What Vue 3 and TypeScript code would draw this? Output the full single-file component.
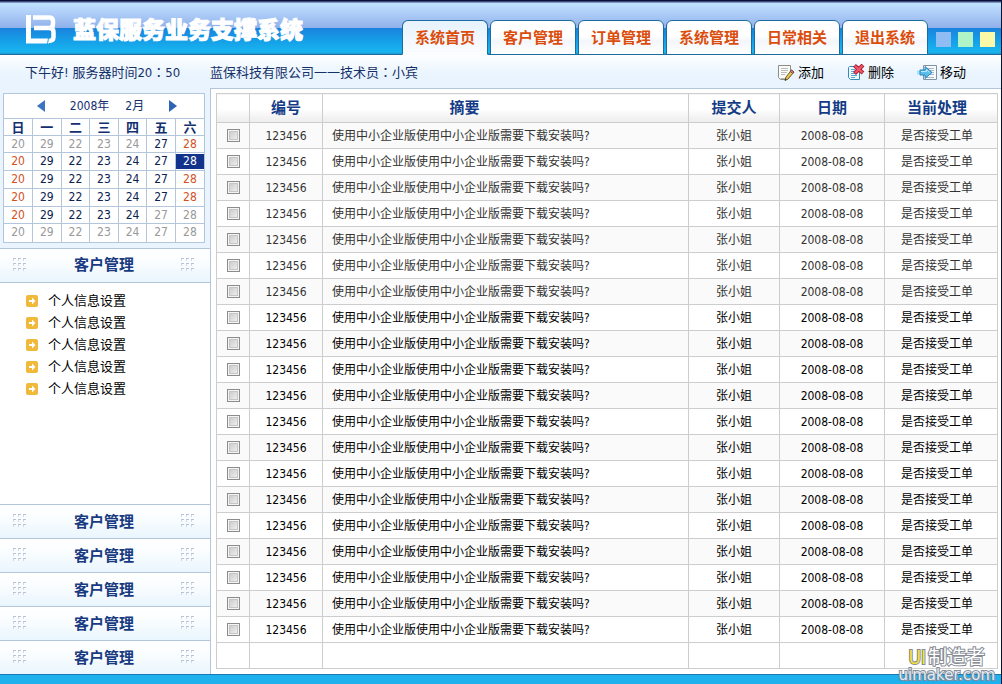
<script setup lang="ts">
import { ref } from 'vue'

interface Day { n: number; tone: 'mute' | 'work' | 'rest' | 'picked' }
interface Order { id: string; summary: string; by: string; date: string; state: string; checked: boolean }

const tabs: string[] = ['系统首页', '客户管理', '订单管理', '系统管理', '日常相关', '退出系统']
const activeTab = ref(0)
const themes: string[] = ['blue', 'green', 'yellow']
const weekdays: string[] = ['日', '一', '二', '三', '四', '五', '六']
const numbers = [20, 29, 22, 23, 24, 27, 28]
const tones: Record<string, Day['tone']> = { m: 'mute', w: 'work', r: 'rest', p: 'picked' }
const weeks: Day[][] = ['mmmmmwr', 'rwwwwwp', 'rwwwwwr', 'rwwwwwr', 'rwwwwmm', 'mmmmmmm'].map((row) =>
  row.split('').map((c, i) => ({ n: numbers[i], tone: tones[c] })),
)
const menu: string[] = Array.from({ length: 5 }, () => '个人信息设置')
const sections: string[] = Array.from({ length: 5 }, () => '客户管理')
const orders = ref<Order[]>(
  Array.from({ length: 20 }, () => ({
    id: '123456',
    summary: '使用中小企业版使用中小企业版需要下载安装吗?',
    by: '张小姐',
    date: '2008-08-08',
    state: '是否接受工单',
    checked: false,
  })),
)
</script>

<template>
  <div class="page">
    <header class="top">
      <svg class="logo" viewBox="0 0 32 30" aria-hidden="true">
        <path d="M3.500 1V27H24" fill="none" stroke="#fff" stroke-width="5" />
        <path d="M8 3.500H24Q28 3.500 28 7V10Q28 14 24 14H9M24 14Q28.500 14 28.500 18V23Q28.500 27 23 27" fill="none" stroke="#fff" stroke-width="4.500" />
        <path d="M23.500 24L22.500 30" stroke="#1ba5ea" stroke-width="1" />
      </svg>
      <h1>蓝保服务业务支撑系统</h1>
      <nav class="tabs">
        <a v-for="(t, i) in tabs" :key="t" href="#" :class="['tab', { active: i === activeTab }]" @click.prevent="activeTab = i">{{ t }}</a>
      </nav>
      <div class="themes">
        <button v-for="c in themes" :key="c" type="button" :class="['swatch', c]" :aria-label="c"></button>
      </div>
    </header>

    <div class="bar">
      <span class="greet">下午好! 服务器时间20<span class="colon">：</span>50</span>
      <span class="company">蓝保科技有限公司一一技术员<span class="colon">：</span>小宾</span>
      <div class="tools">
        <button type="button">
          <svg viewBox="0 0 18 18" aria-hidden="true">
            <path d="M1.500 1.500H13.500V12L10 15.500H3.500L1.500 13.500Z" fill="#fbfbf6" stroke="#8d8d86" />
            <path d="M3.500 14.500H11L13.500 12" fill="none" stroke="#b5b5ae" />
            <path d="M4 4.500H11M4 6.500H11M4 8.500H10M4 10.500H8" stroke="#b9bcc0" />
            <path d="M14.500 6L17 8L11 15L8 16.500L9 13Z" fill="#e8c35a" stroke="#6e5a2a" />
            <path d="M14.500 6L17 8L15.800 9.500L13.300 7.500Z" fill="#c98c8c" stroke="#7a4a3a" />
            <path d="M8 16.500L8.500 14.700L9.700 15.700Z" fill="#222" />
          </svg>
          添加
        </button>
        <button type="button">
          <svg viewBox="0 0 18 18" aria-hidden="true">
            <path d="M2.500 2.500H12.500V15.500H3.500L1.500 13.500V3.500Z" fill="#eaf7fd" stroke="#3c87b5" />
            <path d="M4 5.500H8M4 7.500H9M4 9.500H10M4 11.500H10M4 13.500H8" stroke="#5da9cf" />
            <path d="M7.500 1.500L16 9M16 1L7.500 9.500" stroke="#a81c2c" stroke-width="4" />
            <path d="M8 2L15.500 8.600M15.500 1.500L8 9" stroke="#f0576a" stroke-width="2.200" />
          </svg>
          删除
        </button>
        <button type="button">
          <svg class="wide" viewBox="0 0 20 18" aria-hidden="true">
            <path d="M6.500 1.500H19.500V15.500H6.500Z" fill="#f7fafc" stroke="#7f93a5" />
            <path d="M9 4.500H17M12 6.500H17M14 8.500H17M13 10.500H17M9 13.500H17" stroke="#a9b8c4" />
            <path d="M0 6.500H4V10.500H0Z" fill="#a6e2f8" />
            <path d="M3 6H8V2.500L15 8.500L8 14.500V11H3Z" fill="#5bbdea" stroke="#2b84bd" />
            <path d="M4 7.500H9.500V5.500L12.500 8.500" fill="none" stroke="#b8e9fb" />
          </svg>
          移动
        </button>
      </div>
    </div>

    <div class="body">
      <aside class="side">
        <div class="calwrap">
          <div class="cal">
            <div class="calhead">
              <button type="button" aria-label="上月"><svg viewBox="0 0 8 12"><path d="M8 0V12L0 6Z" fill="#3c74c4" /></svg></button>
              <span class="month"><span>2008年</span><span>2月</span></span>
              <button type="button" aria-label="下月"><svg viewBox="0 0 8 12"><path d="M0 0V12L8 6Z" fill="#2f63b8" /></svg></button>
            </div>
            <table class="days">
              <thead>
                <tr><th v-for="w in weekdays" :key="w" scope="col">{{ w }}</th></tr>
              </thead>
              <tbody>
                <tr v-for="(week, i) in weeks" :key="i">
                  <td v-for="(d, j) in week" :key="j" :class="d.tone"><span>{{ d.n }}</span></td>
                </tr>
              </tbody>
            </table>
          </div>
        </div>
        <button type="button" class="section"><i class="grip"></i>客户管理<i class="grip"></i></button>
        <ul class="menu">
          <li v-for="(m, i) in menu" :key="i">
            <a href="#" @click.prevent>
              <svg viewBox="0 0 12 12" aria-hidden="true">
                <rect width="12" height="12" rx="2" fill="#f0b93a" />
                <path d="M3 5H6V2.500L9.500 6L6 9.500V7H3Z" fill="#fff" />
              </svg>{{ m }}
            </a>
          </li>
        </ul>
        <button v-for="(s, i) in sections" :key="i" type="button" class="section"><i class="grip"></i>{{ s }}<i class="grip"></i></button>
      </aside>

      <main class="content">
        <table class="orders">
          <colgroup>
            <col class="c-check"><col class="c-id"><col><col class="c-by"><col class="c-date"><col class="c-state">
          </colgroup>
          <thead>
            <tr>
              <th></th>
              <th scope="col">编号</th>
              <th scope="col" class="summary">摘要</th>
              <th scope="col">提交人</th>
              <th scope="col">日期</th>
              <th scope="col" class="state">当前处理</th>
            </tr>
          </thead>
          <tbody>
            <tr v-for="(o, i) in orders" :key="i" :class="{ dim: i < 7 }">
              <td><input v-model="o.checked" type="checkbox" :aria-label="o.id"></td>
              <td>{{ o.id }}</td>
              <td class="summary">{{ o.summary }}</td>
              <td>{{ o.by }}</td>
              <td>{{ o.date }}</td>
              <td class="state">{{ o.state }}</td>
            </tr>
            <tr><td></td><td></td><td></td><td></td><td></td><td></td></tr>
          </tbody>
        </table>
      </main>
    </div>

    <footer class="foot"></footer>
    <div class="mark">
      <div class="mark-name"><b>UI</b>制造者</div>
      <div class="mark-site">uimaker.com</div>
    </div>
  </div>
</template>

<style>
body { margin: 0; }
</style>

<style scoped>
* { box-sizing: border-box; }
.page {
  position: relative;
  display: flex;
  flex-direction: column;
  min-height: 100vh;
  border-right: 1px solid #0b1230;
  background: #fff;
  color: #000;
  font: 12px/18px "DejaVu Sans Condensed", "Noto Sans CJK SC", sans-serif;
}
button { padding: 0; border: 0; background: none; font: inherit; color: inherit; cursor: pointer; }
a { color: inherit; text-decoration: none; }
table { border-collapse: collapse; table-layout: fixed; width: 100%; }
svg { display: block; flex: none; }

.top {
  display: flex;
  align-items: flex-end;
  height: 55px;
  padding: 0 6px 0 25px;
  border-top: 1px solid #081038;
  border-bottom: 1px solid #1c6c9f;
  background: linear-gradient(#3a4a80 0, #3a4a80 1px, #bfe2ff 2px, #b3d2fa 10px, #8fb0ea 27px, #1b82de 27px, #169be6 38px, #17b6ef 51px, #1e96d0 53px);
}
.logo { width: 32px; height: 30px; align-self: flex-start; margin-top: 13px; }
h1 {
  margin: 0 0 0 16px;
  align-self: flex-start;
  padding-top: 11px;
  font: 900 23px/32px "Noto Sans CJK SC", sans-serif;
  color: #fff;
  -webkit-text-stroke: 1px #fff;
  white-space: nowrap;
}
.tabs { display: flex; gap: 2px; margin: 0 8px -1px auto; }
.tab {
  width: 86px;
  height: 35px;
  border: 1px solid #1c6c9f;
  border-radius: 6px 6px 0 0;
  background: linear-gradient(#fff 0, #fff 45%, #f3f6fa 60%, #fff 100%);
  color: #dc4d0c;
  font-size: 15px;
  font-weight: 700;
  line-height: 34px;
  text-align: center;
  white-space: nowrap;
}
.tab.active { border-bottom-color: #f8fcff; background: linear-gradient(#e6f2fd, #fbfdff); }
.themes { display: flex; gap: 7px; margin-bottom: 7px; }
.swatch { width: 15px; height: 15px; }
.swatch.blue { background: #8fbcf3; }
.swatch.green { background: #b0f3c6; }
.swatch.yellow { background: #fbf9a8; }

.bar {
  display: flex;
  align-items: center;
  height: 33px;
  padding: 2px 35px 0 25px;
  background: linear-gradient(#fdfeff, #e9f4fe 60%);
  color: #153068;
  font-size: 13px;
  white-space: nowrap;
}
.greet { width: 185px; }
.colon { font-family: "Noto Sans CJK TC", sans-serif; }
.tools { display: flex; gap: 23px; margin-left: auto; color: #000; }
.tools button { display: flex; align-items: center; gap: 3px; }
.tools svg { width: 18px; height: 18px; }
.tools .wide { width: 20px; }

.body { display: flex; flex: 1; }
.side { display: flex; flex-direction: column; width: 210px; flex: none; }
.calwrap { padding: 5px 5px 5px 3px; background: #e9f4fe; }
.cal { border: 1px solid #b4c6dc; background: #fff; color: #123070; }
.calhead { display: flex; justify-content: space-between; align-items: center; height: 24px; padding: 0 27px 0 33px; }
.calhead svg { width: 8px; height: 12px; }
.month { display: flex; gap: 16px; }
.days th, .days td { padding: 0; border: 1px solid #b4c6dc; text-align: center; line-height: 15px; height: 18px; }
.days th { height: 17px; }
.days tbody tr:nth-child(4n+1) td { height: 17px; }
.days tr > :first-child { border-left: 0; }
.days tr > :last-child { border-right: 0; }
.days tr:last-child td { border-bottom: 0; }
.days th { font-size: 13px; font-weight: 700; }
.mute { color: #999; }
.work { color: #0b2150; }
.rest { color: #d2521c; }
.picked span { display: block; background: #12338c; color: #fff; }

.section {
  display: flex;
  justify-content: space-between;
  align-items: center;
  height: 34px;
  padding: 0 15px 0 13px;
  border-top: 1px solid #b4c6dc;
  background: linear-gradient(#fff, #fafdff 40%, #e9f5fd);
  color: #173a80;
  font-size: 15px;
  font-weight: 700;
}
.grip {
  width: 14px;
  height: 15px;
  background:
    linear-gradient(90deg, #b9c3d4 3px, transparent 3px) 0 0 / 5px 1px repeat-x,
    linear-gradient(90deg, #b9c3d4 3px, transparent 3px) 0 5px / 5px 1px repeat-x,
    linear-gradient(90deg, #b9c3d4 3px, transparent 3px) 0 10px / 5px 1px repeat-x,
    linear-gradient(90deg, #d3dae5 1px, transparent 1px) 0 0 / 5px 3px repeat-x,
    linear-gradient(90deg, #d3dae5 1px, transparent 1px) 0 5px / 5px 3px repeat-x,
    linear-gradient(90deg, #d3dae5 1px, transparent 1px) 0 10px / 5px 3px repeat-x;
}
.menu { flex: 1; margin: 0; padding: 7px 0 0 26px; border-top: 1px solid #b4c6dc; list-style: none; font-size: 13px; }
.menu a { display: flex; align-items: center; gap: 10px; height: 22px; }
.menu svg { width: 12px; height: 12px; }

.content { flex: 1; min-width: 0; padding: 4px 3px 4px 5px; border: 1px solid #b4c6dc; border-width: 1px 0 0 1px; }
.orders th, .orders td { padding: 0; border: 1px solid #cdcdcd; text-align: center; white-space: nowrap; }
.c-check { width: 33px; }
.c-id { width: 73px; }
.c-by { width: 91px; }
.c-date { width: 105px; }
.c-state { width: 113px; }
.orders th { height: 29px; background: linear-gradient(#fff 50%, #ececec); color: #143c86; font-size: 15px; font-weight: 700; }
.orders th.summary { padding-right: 82px; }
.orders td { height: 26px; }
.orders td.summary { padding-left: 9px; text-align: left; }
.orders .state { padding-right: 8px; }
.orders tbody tr:nth-child(odd) { background: #fafafa; }
.orders tbody tr:last-child { background: #fff; }
.dim { color: #333; }
input {
  display: block;
  appearance: none;
  width: 13px;
  height: 13px;
  margin: 0 auto;
  border: 1px solid #8c8c8c;
  background: linear-gradient(135deg, #c4c4c4, #f6f6f6);
  box-shadow: inset 0 0 0 1px #f4f4f4, inset 0 0 0 2px #c6c6c6;
}
input:checked { background: #4a78b8; }

.foot { height: 10px; border-top: 1px solid #1a78b0; background: #1fb0ee; }
.mark { position: absolute; right: 6px; bottom: 2px; text-align: center; color: #fff; white-space: nowrap; -webkit-text-stroke: 2px #868b96; paint-order: stroke fill; }
.mark-name { font-size: 19px; line-height: 22px; font-weight: 400; }
.mark-name b { margin-right: 2px; color: #f4e23a; font-weight: 400; }
.mark-site { font: 15px/14px "DejaVu Sans", sans-serif; color: #dfeefa; }
</style>
